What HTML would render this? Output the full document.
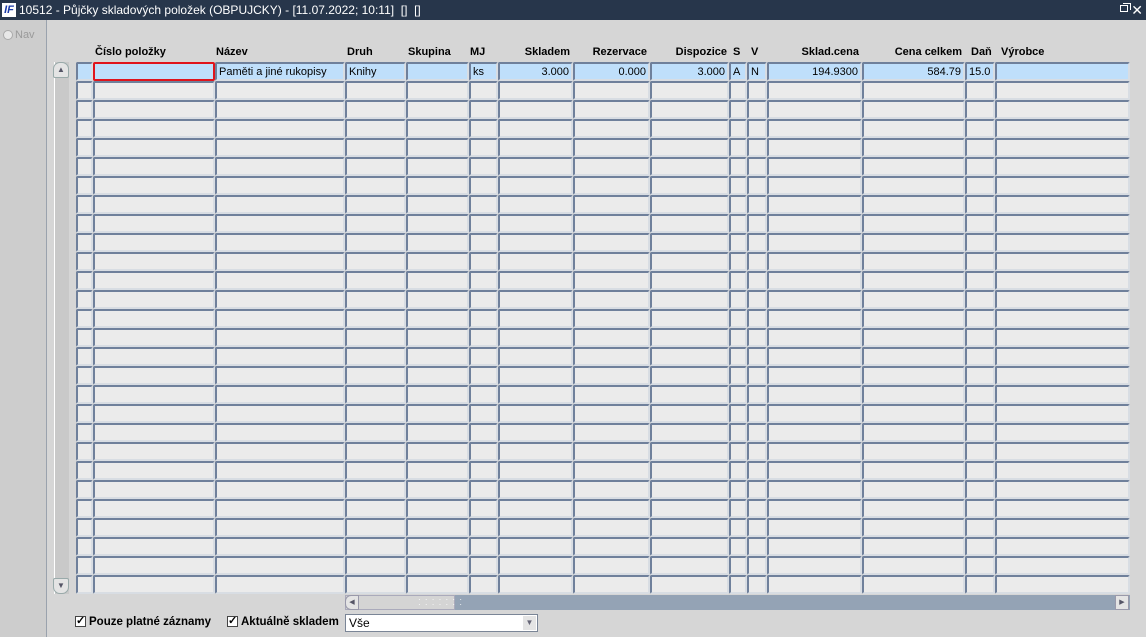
<!DOCTYPE html>
<html><head><meta charset="utf-8"><style>
*{box-sizing:border-box;margin:0;padding:0}
body{width:1146px;height:637px;overflow:hidden;background:#d6d6d6;font-family:"Liberation Sans",Arial,sans-serif;font-size:11px;position:relative}
.a{position:absolute}
#title{left:0;top:0;width:1146px;height:20px;background:#27364b;color:#fff;font-size:12px;line-height:20px;padding-left:19px}
#logo{left:2px;top:3px;width:14px;height:14px;background:#fff;color:#1a3aa8;font-weight:bold;font-style:italic;font-size:11px;line-height:14px;text-align:center}
#left{left:0;top:20px;width:47px;height:617px;background:#cdcdcd;border-right:1px solid #9aa2ad}
.h{position:absolute;top:46px;font-weight:bold;font-size:11px;color:#000}
.c{position:absolute;height:19px;background:#ebebeb;border:2px solid;border-color:#6f809b #d8dde3 #d8dde3 #6f809b;border-radius:2px;font-size:11px;line-height:15px;padding:1px 2px 0;white-space:nowrap;overflow:hidden}
.s{background:#bfdffb}
.r{text-align:right}
</style></head><body>
<div class="a" id="title">10512 - Půjčky skladových položek (OBPUJCKY) - [11.07.2022; 10:11]&nbsp; []&nbsp; []</div>
<div class="a" id="logo">IF</div>
<div class="a" style="right:18px;top:5px;width:8px;height:7px;border:1px solid #fff"></div>
<div class="a" style="right:15px;top:3px;width:8px;height:7px;border-top:1px solid #fff;border-right:1px solid #fff"></div>
<div class="a" style="right:3px;top:0;color:#fff;font-size:14px;line-height:20px">✕</div>
<div class="a" id="left"></div>
<div class="a" style="left:3px;top:30px;width:10px;height:10px;border-radius:50%;background:#e8e8e8;border:1px solid #aaa"></div>
<div class="a" style="left:15px;top:29px;color:#9a9a9a;font-size:11px">Nav</div>

<div class="h" style="left:95px">Číslo položky</div>
<div class="h" style="left:216px">Název</div>
<div class="h" style="left:347px">Druh</div>
<div class="h" style="left:408px">Skupina</div>
<div class="h" style="left:470px">MJ</div>
<div class="h" style="left:498px;width:72px;text-align:right">Skladem</div>
<div class="h" style="left:573px;width:74px;text-align:right">Rezervace</div>
<div class="h" style="left:650px;width:77px;text-align:right">Dispozice</div>
<div class="h" style="left:733px">S</div>
<div class="h" style="left:751px">V</div>
<div class="h" style="left:767px;width:92px;text-align:right">Sklad.cena</div>
<div class="h" style="left:862px;width:100px;text-align:right">Cena celkem</div>
<div class="h" style="left:971px">Daň</div>
<div class="h" style="left:1001px">Výrobce</div>

<div class="a" style="left:54px;top:62px;width:15px;height:532px;background:#c9c9c9;border-left:1px solid #fff"></div>
<div class="a" style="left:53px;top:62px;width:16px;height:16px;border-radius:7px 7px 2px 2px;background:#e4e4e4;border:1px solid #9aa;color:#556;font-size:8px;text-align:center;line-height:14px">▲</div>
<div class="a" style="left:53px;top:578px;width:16px;height:16px;border-radius:2px 2px 7px 7px;background:#e4e4e4;border:1px solid #9aa;color:#556;font-size:8px;text-align:center;line-height:14px">▼</div>

<div id="grid"></div>
<div class="c s" style="left:76px;top:62px;width:17px"></div>
<div class="c s" style="left:93px;top:62px;width:122px;border:2px solid #e0141c"></div>
<div class="c s" style="left:215px;top:62px;width:130px">Paměti a jiné rukopisy</div>
<div class="c s" style="left:345px;top:62px;width:61px">Knihy</div>
<div class="c s" style="left:406px;top:62px;width:63px"></div>
<div class="c s" style="left:469px;top:62px;width:29px">ks</div>
<div class="c s r" style="left:498px;top:62px;width:75px">3.000</div>
<div class="c s r" style="left:573px;top:62px;width:77px">0.000</div>
<div class="c s r" style="left:650px;top:62px;width:79px">3.000</div>
<div class="c s" style="left:729px;top:62px;width:18px">A</div>
<div class="c s" style="left:747px;top:62px;width:20px">N</div>
<div class="c s r" style="left:767px;top:62px;width:95px">194.9300</div>
<div class="c s r" style="left:862px;top:62px;width:103px">584.79</div>
<div class="c s" style="left:965px;top:62px;width:30px">15.0</div>
<div class="c s" style="left:995px;top:62px;width:135px"></div>

<div class="a" style="left:345px;top:595px;width:785px;height:15px;background:#94a3b5"></div>
<div class="a" style="left:345px;top:595px;width:110px;height:15px;background:#d4d4d4;border:1px solid #aab"></div>
<div class="a" style="left:345px;top:595px;width:14px;height:15px;background:#e4e4e4;border:1px solid #99a;border-radius:6px 0 0 6px;font-size:7px;line-height:13px;text-align:center;color:#556">◀</div>
<div class="a" style="left:1115px;top:595px;width:14px;height:15px;background:#e4e4e4;border:1px solid #99a;font-size:7px;line-height:13px;text-align:center;color:#556">▶</div>
<div class="a" style="left:418px;top:597px;font-size:8px;color:#fff;letter-spacing:1px;line-height:5px">· · · · · · ·<br>· · · · · · ·</div>

<div class="a" style="left:75px;top:616px;width:11px;height:11px;background:#fff;border:1px solid #444;font-size:11px;line-height:9px;text-align:center;font-weight:bold">✓</div>
<div class="a" style="left:89px;top:616px;font-weight:bold;font-size:11.5px">Pouze platné záznamy</div>
<div class="a" style="left:227px;top:616px;width:11px;height:11px;background:#fff;border:1px solid #444;font-size:11px;line-height:9px;text-align:center;font-weight:bold">✓</div>
<div class="a" style="left:241px;top:616px;font-weight:bold;font-size:11.5px">Aktuálně skladem</div>
<div class="a" style="left:345px;top:614px;width:193px;height:18px;background:#fff;border:1px solid #7a8596;font-size:12px;line-height:17px;padding-left:3px">Vše</div>
<div class="a" style="left:523px;top:616px;width:13px;height:14px;background:#e4e4e4;font-size:8px;line-height:14px;text-align:center;color:#667">▼</div>

<script>
var cols=[[76,17],[93,122],[215,130],[345,61],[406,63],[469,29],[498,75],[573,77],[650,79],[729,18],[747,20],[767,95],[862,103],[965,30],[995,135]];
var h='';
for(var r=1;r<28;r++){var y=62+r*19;for(var i=0;i<cols.length;i++)h+='<div class="c" style="left:'+cols[i][0]+'px;top:'+y+'px;width:'+cols[i][1]+'px"></div>';}
document.getElementById('grid').innerHTML=h;
</script>
</body></html>
